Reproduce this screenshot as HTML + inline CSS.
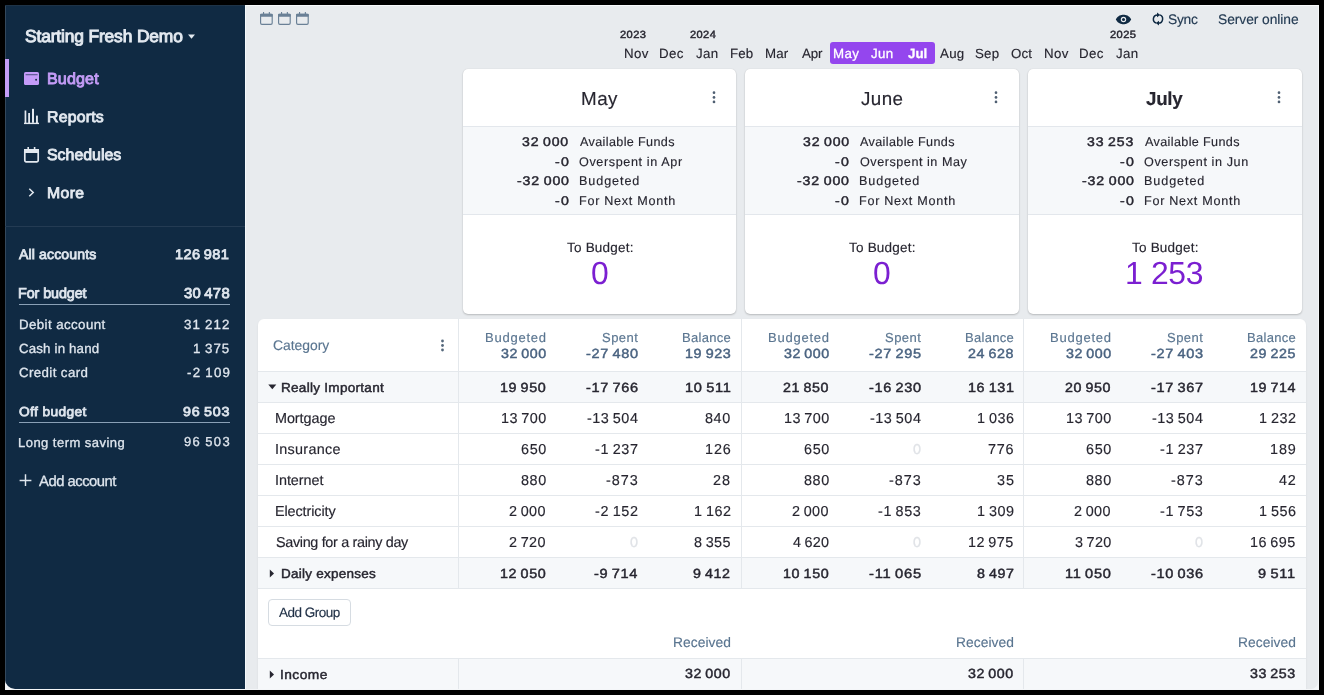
<!DOCTYPE html>
<html><head><meta charset="utf-8"><style>
*{box-sizing:border-box;margin:0;padding:0}
html,body{width:1324px;height:695px;overflow:hidden;background:#000}
body{font-family:"Liberation Sans",sans-serif;position:relative}
.t{position:absolute;white-space:nowrap;will-change:transform;text-rendering:geometricPrecision}
.b{position:absolute}
</style></head>
<body>
<div style="position:absolute;left:5px;top:5px;width:1314px;height:685px;background:#f4f6f8"></div>
<div id="clip" style="position:absolute;left:0;top:0;width:1324px;height:695px;clip-path:inset(5px 6px 6px 5px round 0 0 7px 10px)">
<div class="b" style="left:5px;top:5px;width:1314px;height:685px;background:#e8ebee;border-radius:0 0 10px 10px"></div>
<div class="b" style="left:5px;top:5px;width:240px;height:685px;background:#102a43;border-bottom-left-radius:10px"></div>
<div class="b" style="left:245px;top:5px;width:1074px;height:1px;background:#f8fafc"></div>
<div class="b" style="left:245px;top:5px;width:1px;height:685px;background:#f4f8fb"></div>
<div class="b" style="left:5px;top:5px;width:1px;height:685px;background:#33485c"></div>
<div class="b" style="left:5px;top:5px;width:240px;height:1px;background:#1e3347"></div>
<div class="t" style="left:24.74px;top:28px;font-size:17.4px;line-height:17.4px;letter-spacing:-0.144px;font-weight:normal;color:#e3e9f0;-webkit-text-stroke:0.9666666666666666px #e3e9f0;">Starting Fresh Demo</div>
<svg class="b" style="left:187px;top:33px" width="9" height="7" viewBox="0 0 9 7"><path d="M1 1.5 L8 1.5 L4.5 5.8 Z" fill="#e3e9f0"/></svg>
<div class="b" style="left:5px;top:59px;width:4px;height:38px;background:#c49cf7"></div>
<div class="t" style="left:46.64px;top:72px;font-size:15.9px;line-height:15.9px;letter-spacing:0.128px;transform:scaleX(1.0132);transform-origin:0 0;font-weight:normal;color:#c49cf7;-webkit-text-stroke:0.8833333333333333px #c49cf7;">Budget</div>
<div class="t" style="left:46.66px;top:110px;font-size:15.5px;line-height:15.5px;letter-spacing:0.194px;transform:scaleX(1.0227);transform-origin:0 0;font-weight:normal;color:#e3e9f0;-webkit-text-stroke:0.8611111111111112px #e3e9f0;">Reports</div>
<div class="t" style="left:47.21px;top:148px;font-size:15.9px;line-height:15.9px;letter-spacing:0.004px;font-weight:normal;color:#e3e9f0;-webkit-text-stroke:0.8833333333333333px #e3e9f0;">Schedules</div>
<div class="t" style="left:46.66px;top:186px;font-size:15.2px;line-height:15.2px;letter-spacing:0.385px;transform:scaleX(1.0365);transform-origin:0 0;font-weight:normal;color:#e3e9f0;-webkit-text-stroke:0.8444444444444443px #e3e9f0;">More</div>
<svg class="b" style="left:24px;top:72px" width="15" height="13" viewBox="0 0 15 13">
<rect x="0" y="0" width="15" height="13" rx="1.6" fill="#c49bf8"/>
<rect x="1.6" y="2.3" width="12" height="0.9" fill="#102a43" opacity="0.75"/>
<circle cx="12.1" cy="7.8" r="0.95" fill="#102a43"/>
</svg>
<svg class="b" style="left:23px;top:108px" width="17" height="17" viewBox="0 0 17 17">
<g fill="#e3e9f0">
<rect x="1" y="14.7" width="15" height="1.4"/>
<rect x="1.6" y="2.5" width="1.7" height="12.5"/>
<rect x="5.2" y="5" width="1.8" height="10"/>
<rect x="9" y="0.8" width="2" height="14"/>
<rect x="13" y="7.6" width="1.9" height="7.4"/>
</g></svg>
<svg class="b" style="left:23px;top:146px" width="17" height="17" viewBox="0 0 17 17">
<rect x="1.8" y="3.8" width="13.4" height="12" rx="1.3" fill="none" stroke="#e3e9f0" stroke-width="1.7"/>
<g fill="#e3e9f0"><rect x="1" y="3" width="15" height="4"/><rect x="4.4" y="1" width="1.6" height="3"/><rect x="10.8" y="1" width="1.6" height="3"/></g>
</svg>
<svg class="b" style="left:27px;top:187px" width="9" height="11" viewBox="0 0 9 11">
<path d="M2.3 1.8 L6.2 5.5 L2.3 9.2" fill="none" stroke="#e3e9f0" stroke-width="1.5"/>
</svg>
<div class="b" style="left:5px;top:226px;width:240px;height:1px;background:#243b53"></div>
<div class="t" style="left:19.30px;top:248px;font-size:13.9px;line-height:13.9px;letter-spacing:0.104px;transform:scaleX(1.0156);transform-origin:0 0;font-weight:normal;color:#dfe6ee;-webkit-text-stroke:0.7722222222222223px #dfe6ee;">All accounts</div>
<div class="t" style="left:175.13px;top:248px;font-size:13.9px;line-height:13.9px;letter-spacing:0.364px;transform:scaleX(1.0483);transform-origin:0 0;font-weight:normal;color:#dfe6ee;-webkit-text-stroke:0.7722222222222223px #dfe6ee;">126 981</div>
<div class="t" style="left:18.14px;top:287px;font-size:14.4px;line-height:14.4px;letter-spacing:-0.114px;font-weight:normal;color:#dfe6ee;-webkit-text-stroke:0.8px #dfe6ee;">For budget</div>
<div class="t" style="left:183.70px;top:287px;font-size:14.4px;line-height:14.4px;letter-spacing:0.263px;transform:scaleX(1.0325);transform-origin:0 0;font-weight:normal;color:#dfe6ee;-webkit-text-stroke:0.8px #dfe6ee;">30 478</div>
<div class="b" style="left:19px;top:304px;width:211px;height:1px;background:#8aa0b6"></div>
<div class="t" style="left:18.54px;top:318px;font-size:13.3px;line-height:13.3px;letter-spacing:0.408px;font-weight:normal;color:#dfe6ee;-webkit-text-stroke:0.3px #dfe6ee;">Debit account</div>
<div class="t" style="left:184.23px;top:318px;font-size:13.3px;line-height:13.3px;letter-spacing:1.146px;font-weight:normal;color:#dfe6ee;-webkit-text-stroke:0.3px #dfe6ee;">31 212</div>
<div class="t" style="left:18.94px;top:342px;font-size:13.3px;line-height:13.3px;letter-spacing:0.157px;font-weight:normal;color:#dfe6ee;-webkit-text-stroke:0.3px #dfe6ee;">Cash in hand</div>
<div class="t" style="left:193.30px;top:342px;font-size:13.3px;line-height:13.3px;letter-spacing:0.994px;font-weight:normal;color:#dfe6ee;-webkit-text-stroke:0.3px #dfe6ee;">1 375</div>
<div class="t" style="left:18.94px;top:366px;font-size:13.3px;line-height:13.3px;letter-spacing:0.383px;font-weight:normal;color:#dfe6ee;-webkit-text-stroke:0.3px #dfe6ee;">Credit card</div>
<div class="t" style="left:186.67px;top:366px;font-size:13.3px;line-height:13.3px;letter-spacing:1.258px;font-weight:normal;color:#dfe6ee;-webkit-text-stroke:0.3px #dfe6ee;">-2 109</div>
<div class="t" style="left:19.11px;top:405px;font-size:13.0px;line-height:13.0px;letter-spacing:0.362px;transform:scaleX(1.0575);transform-origin:0 0;font-weight:normal;color:#dfe6ee;-webkit-text-stroke:0.75px #dfe6ee;">Off budget</div>
<div class="t" style="left:183.38px;top:405px;font-size:13.0px;line-height:13.0px;letter-spacing:0.683px;transform:scaleX(1.0998);transform-origin:0 0;font-weight:normal;color:#dfe6ee;-webkit-text-stroke:0.75px #dfe6ee;">96 503</div>
<div class="b" style="left:19px;top:422px;width:211px;height:1px;background:#8aa0b6"></div>
<div class="t" style="left:18.46px;top:436px;font-size:13.0px;line-height:13.0px;letter-spacing:0.467px;font-weight:normal;color:#dfe6ee;-webkit-text-stroke:0.3px #dfe6ee;">Long term saving</div>
<div class="t" style="left:184.31px;top:435px;font-size:13.0px;line-height:13.0px;letter-spacing:1.373px;font-weight:normal;color:#dfe6ee;-webkit-text-stroke:0.3px #dfe6ee;">96 503</div>
<svg class="b" style="left:18.5px;top:474.4px" width="13" height="13" viewBox="0 0 13 13">
<path d="M6.5 0.3 V11.9 M0.6 6.5 H12.4" stroke="#dfe6ee" stroke-width="1.45"/></svg>
<div class="t" style="left:39.30px;top:475px;font-size:14.8px;line-height:14.8px;letter-spacing:-0.481px;font-weight:normal;color:#dfe6ee;-webkit-text-stroke:0.3px #dfe6ee;">Add account</div>
<svg class="b" style="left:260px;top:12px" width="13" height="13" viewBox="0 0 13 13">
<rect x="0.6" y="2.2" width="11.6" height="10.1" rx="1.3" fill="none" stroke="#6a8096" stroke-width="1.15"/>
<rect x="0.05" y="1.8" width="12.7" height="3" rx="0.8" fill="#6a8096"/>
<rect x="3" y="0" width="1.1" height="2.6" fill="#6a8096"/><rect x="8.8" y="0" width="1.1" height="2.6" fill="#6a8096"/>
</svg>
<svg class="b" style="left:278px;top:12px" width="13" height="13" viewBox="0 0 13 13">
<rect x="0.6" y="2.2" width="11.6" height="10.1" rx="1.3" fill="none" stroke="#6a8096" stroke-width="1.15"/>
<rect x="0.05" y="1.8" width="12.7" height="3" rx="0.8" fill="#6a8096"/>
<rect x="3" y="0" width="1.1" height="2.6" fill="#6a8096"/><rect x="8.8" y="0" width="1.1" height="2.6" fill="#6a8096"/>
</svg>
<svg class="b" style="left:296px;top:12px" width="13" height="13" viewBox="0 0 13 13">
<rect x="0.6" y="2.2" width="11.6" height="10.1" rx="1.3" fill="none" stroke="#6a8096" stroke-width="1.15"/>
<rect x="0.05" y="1.8" width="12.7" height="3" rx="0.8" fill="#6a8096"/>
<rect x="3" y="0" width="1.1" height="2.6" fill="#6a8096"/><rect x="8.8" y="0" width="1.1" height="2.6" fill="#6a8096"/>
</svg>
<svg class="b" style="left:1115px;top:14px" width="17" height="11" viewBox="0 0 17 11">
<path d="M0.8 5.5 C3 1.5 6 0.8 8.5 0.8 C11 0.8 14 1.5 16.2 5.5 C14 9.5 11 10.2 8.5 10.2 C6 10.2 3 9.5 0.8 5.5 Z" fill="#102a43"/>
<circle cx="8.5" cy="5.5" r="2.7" fill="#e8ebee"/><circle cx="8.5" cy="5.5" r="1.5" fill="#102a43"/>
</svg>
<svg class="b" style="left:1152px;top:12px" width="12" height="14" viewBox="0 0 12 14">
<path d="M5.6 2.9 A4.2 4.2 0 0 0 4.3 11.1" fill="none" stroke="#102a43" stroke-width="1.5"/>
<path d="M6.4 11.1 A4.2 4.2 0 0 0 7.7 2.9" fill="none" stroke="#102a43" stroke-width="1.5"/>
<path d="M5 0.6 L8.2 2.9 L5 5.2 Z" fill="#102a43"/>
<path d="M7 8.8 L3.8 11.1 L7 13.4 Z" fill="#102a43"/>
</svg>
<div class="t" style="left:1167.88px;top:13px;font-size:13.8px;line-height:13.8px;letter-spacing:-0.246px;font-weight:normal;color:#243b53;-webkit-text-stroke:0.15px #243b53;">Sync</div>
<div class="t" style="left:1217.98px;top:13px;font-size:13.8px;line-height:13.8px;letter-spacing:-0.059px;font-weight:normal;color:#243b53;-webkit-text-stroke:0.15px #243b53;">Server online</div>
<div class="b" style="left:830px;top:42px;width:105px;height:22px;background:#9446ee;border-radius:3px"></div>
<div class="t" style="left:624.29px;top:47px;font-size:13.3px;line-height:13.3px;letter-spacing:0.345px;font-weight:normal;color:#272630;-webkit-text-stroke:0.15px #272630;">Nov</div>
<div class="t" style="left:659.44px;top:47px;font-size:13.3px;line-height:13.3px;letter-spacing:0.361px;font-weight:normal;color:#272630;-webkit-text-stroke:0.15px #272630;">Dec</div>
<div class="t" style="left:696.30px;top:47px;font-size:13.3px;line-height:13.3px;letter-spacing:0.292px;font-weight:normal;color:#272630;-webkit-text-stroke:0.15px #272630;">Jan</div>
<div class="t" style="left:730.14px;top:47px;font-size:13.3px;line-height:13.3px;letter-spacing:0.160px;font-weight:normal;color:#272630;-webkit-text-stroke:0.15px #272630;">Feb</div>
<div class="t" style="left:764.94px;top:47px;font-size:13.3px;line-height:13.3px;letter-spacing:0.160px;font-weight:normal;color:#272630;-webkit-text-stroke:0.15px #272630;">Mar</div>
<div class="t" style="left:801.80px;top:47px;font-size:13.3px;line-height:13.3px;letter-spacing:-0.074px;font-weight:normal;color:#272630;-webkit-text-stroke:0.15px #272630;">Apr</div>
<div class="t" style="left:833.49px;top:47px;font-size:13.3px;line-height:13.3px;letter-spacing:0.413px;font-weight:normal;color:#ffffff;-webkit-text-stroke:0.3px #ffffff;">May</div>
<div class="t" style="left:871.30px;top:47px;font-size:13.3px;line-height:13.3px;letter-spacing:0.292px;font-weight:normal;color:#ffffff;-webkit-text-stroke:0.3px #ffffff;">Jun</div>
<div class="t" style="left:907.70px;top:47px;font-size:13.3px;line-height:13.3px;letter-spacing:0.028px;transform:scaleX(1.0031);transform-origin:0 0;font-weight:bold;color:#ffffff;-webkit-text-stroke:0.3px #ffffff;">Jul</div>
<div class="t" style="left:940.30px;top:47px;font-size:13.3px;line-height:13.3px;letter-spacing:0.262px;font-weight:normal;color:#272630;-webkit-text-stroke:0.15px #272630;">Aug</div>
<div class="t" style="left:974.90px;top:47px;font-size:13.3px;line-height:13.3px;letter-spacing:0.228px;font-weight:normal;color:#272630;-webkit-text-stroke:0.15px #272630;">Sep</div>
<div class="t" style="left:1011.20px;top:47px;font-size:13.3px;line-height:13.3px;letter-spacing:0.159px;font-weight:normal;color:#272630;-webkit-text-stroke:0.15px #272630;">Oct</div>
<div class="t" style="left:1044.29px;top:47px;font-size:13.3px;line-height:13.3px;letter-spacing:0.345px;font-weight:normal;color:#272630;-webkit-text-stroke:0.15px #272630;">Nov</div>
<div class="t" style="left:1079.44px;top:47px;font-size:13.3px;line-height:13.3px;letter-spacing:0.361px;font-weight:normal;color:#272630;-webkit-text-stroke:0.15px #272630;">Dec</div>
<div class="t" style="left:1116.30px;top:47px;font-size:13.3px;line-height:13.3px;letter-spacing:0.292px;font-weight:normal;color:#272630;-webkit-text-stroke:0.15px #272630;">Jan</div>
<div class="t" style="left:619.67px;top:30px;font-size:10.5px;line-height:10.5px;letter-spacing:0.400px;transform:scaleX(1.0565);transform-origin:0 0;font-weight:normal;color:#272630;-webkit-text-stroke:0.45px #272630;">2023</div>
<div class="t" style="left:689.67px;top:30px;font-size:10.5px;line-height:10.5px;letter-spacing:0.376px;transform:scaleX(1.0526);transform-origin:0 0;font-weight:normal;color:#272630;-webkit-text-stroke:0.45px #272630;">2024</div>
<div class="t" style="left:1109.67px;top:30px;font-size:10.5px;line-height:10.5px;letter-spacing:0.400px;transform:scaleX(1.0565);transform-origin:0 0;font-weight:normal;color:#272630;-webkit-text-stroke:0.45px #272630;">2025</div>
<div class="b" style="left:463px;top:69px;width:273px;height:245px;background:#fff;border-radius:5px;box-shadow:0 1px 2px rgba(0,0,0,0.2),0 0 1px rgba(0,0,0,0.12);overflow:hidden"><div class="b" style="left:0;top:57px;width:273px;height:89px;background:#f6f8fa;border-top:1px solid #e3e7ec;border-bottom:1px solid #e3e7ec"></div></div>
<div class="t" style="left:580.50px;top:90px;font-size:18.8px;line-height:18.8px;letter-spacing:0.486px;font-weight:normal;color:#272630;-webkit-text-stroke:0.15px #272630;">May</div>
<svg class="b" style="left:711.5px;top:90px" width="4" height="15" viewBox="0 0 4 15"><g fill="#4f5f72"><circle cx="2" cy="2.7" r="1.35"/><circle cx="2" cy="7.4" r="1.35"/><circle cx="2" cy="11.9" r="1.35"/></g></svg>
<div class="t" style="left:522.43px;top:136px;font-size:12.6px;line-height:12.6px;letter-spacing:0.760px;transform:scaleX(1.1157);transform-origin:0 0;font-weight:normal;color:#272630;-webkit-text-stroke:0.45px #272630;">32 000</div>
<div class="t" style="left:579.60px;top:136px;font-size:12.6px;line-height:12.6px;letter-spacing:0.367px;font-weight:normal;color:#272630;-webkit-text-stroke:0.15px #272630;">Available Funds</div>
<div class="t" style="left:554.76px;top:156px;font-size:12.6px;line-height:12.6px;letter-spacing:1.107px;transform:scaleX(1.1208);transform-origin:0 0;font-weight:normal;color:#272630;-webkit-text-stroke:0.45px #272630;">-0</div>
<div class="t" style="left:579.03px;top:156px;font-size:12.6px;line-height:12.6px;letter-spacing:0.619px;font-weight:normal;color:#272630;-webkit-text-stroke:0.15px #272630;">Overspent in Apr</div>
<div class="t" style="left:516.56px;top:175px;font-size:12.6px;line-height:12.6px;letter-spacing:0.751px;transform:scaleX(1.1240);transform-origin:0 0;font-weight:normal;color:#272630;-webkit-text-stroke:0.45px #272630;">-32 000</div>
<div class="t" style="left:578.59px;top:175px;font-size:12.6px;line-height:12.6px;letter-spacing:0.919px;font-weight:normal;color:#272630;-webkit-text-stroke:0.15px #272630;">Budgeted</div>
<div class="t" style="left:554.76px;top:195px;font-size:12.6px;line-height:12.6px;letter-spacing:1.107px;transform:scaleX(1.1208);transform-origin:0 0;font-weight:normal;color:#272630;-webkit-text-stroke:0.45px #272630;">-0</div>
<div class="t" style="left:578.59px;top:195px;font-size:12.6px;line-height:12.6px;letter-spacing:0.719px;font-weight:normal;color:#272630;-webkit-text-stroke:0.15px #272630;">For Next Month</div>
<div class="t" style="left:566.73px;top:241px;font-size:13.5px;line-height:13.5px;letter-spacing:0.210px;font-weight:normal;color:#272630;-webkit-text-stroke:0.15px #272630;">To Budget:</div>
<div class="t" style="left:590.65px;top:258px;font-size:31.9px;line-height:31.9px;letter-spacing:0.000px;font-weight:normal;color:#7b1fd1;">0</div>
<div class="b" style="left:745px;top:69px;width:274px;height:245px;background:#fff;border-radius:5px;box-shadow:0 1px 2px rgba(0,0,0,0.2),0 0 1px rgba(0,0,0,0.12);overflow:hidden"><div class="b" style="left:0;top:57px;width:274px;height:89px;background:#f6f8fa;border-top:1px solid #e3e7ec;border-bottom:1px solid #e3e7ec"></div></div>
<div class="t" style="left:861.22px;top:90px;font-size:18.8px;line-height:18.8px;letter-spacing:0.444px;font-weight:normal;color:#272630;-webkit-text-stroke:0.15px #272630;">June</div>
<svg class="b" style="left:993.5px;top:90px" width="4" height="15" viewBox="0 0 4 15"><g fill="#4f5f72"><circle cx="2" cy="2.7" r="1.35"/><circle cx="2" cy="7.4" r="1.35"/><circle cx="2" cy="11.9" r="1.35"/></g></svg>
<div class="t" style="left:803.03px;top:136px;font-size:12.6px;line-height:12.6px;letter-spacing:0.760px;transform:scaleX(1.1157);transform-origin:0 0;font-weight:normal;color:#272630;-webkit-text-stroke:0.45px #272630;">32 000</div>
<div class="t" style="left:860.30px;top:136px;font-size:12.6px;line-height:12.6px;letter-spacing:0.367px;font-weight:normal;color:#272630;-webkit-text-stroke:0.15px #272630;">Available Funds</div>
<div class="t" style="left:835.36px;top:156px;font-size:12.6px;line-height:12.6px;letter-spacing:1.107px;transform:scaleX(1.1208);transform-origin:0 0;font-weight:normal;color:#272630;-webkit-text-stroke:0.45px #272630;">-0</div>
<div class="t" style="left:859.73px;top:156px;font-size:12.6px;line-height:12.6px;letter-spacing:0.543px;font-weight:normal;color:#272630;-webkit-text-stroke:0.15px #272630;">Overspent in May</div>
<div class="t" style="left:797.16px;top:175px;font-size:12.6px;line-height:12.6px;letter-spacing:0.751px;transform:scaleX(1.1240);transform-origin:0 0;font-weight:normal;color:#272630;-webkit-text-stroke:0.45px #272630;">-32 000</div>
<div class="t" style="left:859.29px;top:175px;font-size:12.6px;line-height:12.6px;letter-spacing:0.919px;font-weight:normal;color:#272630;-webkit-text-stroke:0.15px #272630;">Budgeted</div>
<div class="t" style="left:835.36px;top:195px;font-size:12.6px;line-height:12.6px;letter-spacing:1.107px;transform:scaleX(1.1208);transform-origin:0 0;font-weight:normal;color:#272630;-webkit-text-stroke:0.45px #272630;">-0</div>
<div class="t" style="left:859.29px;top:195px;font-size:12.6px;line-height:12.6px;letter-spacing:0.719px;font-weight:normal;color:#272630;-webkit-text-stroke:0.15px #272630;">For Next Month</div>
<div class="t" style="left:849.23px;top:241px;font-size:13.5px;line-height:13.5px;letter-spacing:0.210px;font-weight:normal;color:#272630;-webkit-text-stroke:0.15px #272630;">To Budget:</div>
<div class="t" style="left:873.15px;top:258px;font-size:31.9px;line-height:31.9px;letter-spacing:0.000px;font-weight:normal;color:#7b1fd1;">0</div>
<div class="b" style="left:1028px;top:69px;width:274px;height:245px;background:#fff;border-radius:5px;box-shadow:0 1px 2px rgba(0,0,0,0.2),0 0 1px rgba(0,0,0,0.12);overflow:hidden"><div class="b" style="left:0;top:57px;width:274px;height:89px;background:#f6f8fa;border-top:1px solid #e3e7ec;border-bottom:1px solid #e3e7ec"></div></div>
<div class="t" style="left:1146.47px;top:90px;font-size:18.8px;line-height:18.8px;letter-spacing:-0.273px;font-weight:bold;color:#272630;-webkit-text-stroke:0.15px #272630;">July</div>
<svg class="b" style="left:1276.5px;top:90px" width="4" height="15" viewBox="0 0 4 15"><g fill="#4f5f72"><circle cx="2" cy="2.7" r="1.35"/><circle cx="2" cy="7.4" r="1.35"/><circle cx="2" cy="11.9" r="1.35"/></g></svg>
<div class="t" style="left:1087.43px;top:136px;font-size:12.6px;line-height:12.6px;letter-spacing:0.765px;transform:scaleX(1.1168);transform-origin:0 0;font-weight:normal;color:#272630;-webkit-text-stroke:0.45px #272630;">33 253</div>
<div class="t" style="left:1145.00px;top:136px;font-size:12.6px;line-height:12.6px;letter-spacing:0.367px;font-weight:normal;color:#272630;-webkit-text-stroke:0.15px #272630;">Available Funds</div>
<div class="t" style="left:1119.76px;top:156px;font-size:12.6px;line-height:12.6px;letter-spacing:1.107px;transform:scaleX(1.1208);transform-origin:0 0;font-weight:normal;color:#272630;-webkit-text-stroke:0.45px #272630;">-0</div>
<div class="t" style="left:1144.43px;top:156px;font-size:12.6px;line-height:12.6px;letter-spacing:0.598px;font-weight:normal;color:#272630;-webkit-text-stroke:0.15px #272630;">Overspent in Jun</div>
<div class="t" style="left:1081.56px;top:175px;font-size:12.6px;line-height:12.6px;letter-spacing:0.751px;transform:scaleX(1.1240);transform-origin:0 0;font-weight:normal;color:#272630;-webkit-text-stroke:0.45px #272630;">-32 000</div>
<div class="t" style="left:1143.99px;top:175px;font-size:12.6px;line-height:12.6px;letter-spacing:0.919px;font-weight:normal;color:#272630;-webkit-text-stroke:0.15px #272630;">Budgeted</div>
<div class="t" style="left:1119.76px;top:195px;font-size:12.6px;line-height:12.6px;letter-spacing:1.107px;transform:scaleX(1.1208);transform-origin:0 0;font-weight:normal;color:#272630;-webkit-text-stroke:0.45px #272630;">-0</div>
<div class="t" style="left:1143.99px;top:195px;font-size:12.6px;line-height:12.6px;letter-spacing:0.719px;font-weight:normal;color:#272630;-webkit-text-stroke:0.15px #272630;">For Next Month</div>
<div class="t" style="left:1132.23px;top:241px;font-size:13.5px;line-height:13.5px;letter-spacing:0.210px;font-weight:normal;color:#272630;-webkit-text-stroke:0.15px #272630;">To Budget:</div>
<div class="t" style="left:1125.21px;top:258px;font-size:31.9px;line-height:31.9px;letter-spacing:-0.320px;font-weight:normal;color:#7b1fd1;">1 253</div>
<div class="b" style="left:258px;top:319px;width:1048px;height:400px;background:#fff;border-radius:6px 6px 0 0;box-shadow:0 1px 2px rgba(0,0,0,0.08)"></div>
<div class="b" style="left:258px;top:371px;width:1048px;height:1px;background:#e4e8ec"></div>
<div class="b" style="left:258px;top:372px;width:1048px;height:30px;background:#f6f8fa"></div>
<div class="b" style="left:258px;top:558px;width:1048px;height:30px;background:#f6f8fa"></div>
<div class="b" style="left:258px;top:402px;width:1048px;height:1px;background:#e4e8ec"></div>
<div class="b" style="left:258px;top:433px;width:1048px;height:1px;background:#e4e8ec"></div>
<div class="b" style="left:258px;top:464px;width:1048px;height:1px;background:#e4e8ec"></div>
<div class="b" style="left:258px;top:495px;width:1048px;height:1px;background:#e4e8ec"></div>
<div class="b" style="left:258px;top:526px;width:1048px;height:1px;background:#e4e8ec"></div>
<div class="b" style="left:258px;top:557px;width:1048px;height:1px;background:#e4e8ec"></div>
<div class="b" style="left:258px;top:588px;width:1048px;height:1px;background:#e4e8ec"></div>
<div class="b" style="left:458px;top:319px;width:1px;height:270px;background:#e4e8ec"></div>
<div class="b" style="left:741px;top:319px;width:1px;height:270px;background:#e4e8ec"></div>
<div class="b" style="left:1023px;top:319px;width:1px;height:270px;background:#e4e8ec"></div>
<div class="b" style="left:258px;top:658px;width:1048px;height:1px;background:#e4e8ec"></div>
<div class="b" style="left:258px;top:659px;width:1048px;height:40px;background:#f6f8fa"></div>
<div class="b" style="left:458px;top:659px;width:1px;height:40px;background:#e4e8ec"></div>
<div class="b" style="left:741px;top:659px;width:1px;height:40px;background:#e4e8ec"></div>
<div class="b" style="left:1023px;top:659px;width:1px;height:40px;background:#e4e8ec"></div>
<div class="t" style="left:272.91px;top:339px;font-size:13.9px;line-height:13.9px;letter-spacing:-0.020px;font-weight:normal;color:#5a7590;-webkit-text-stroke:0.15px #5a7590;">Category</div>
<svg class="b" style="left:440px;top:338px" width="5" height="15" viewBox="0 0 5 15"><g fill="#55687c"><circle cx="2.5" cy="3" r="1.4"/><circle cx="2.5" cy="7.5" r="1.4"/><circle cx="2.5" cy="12" r="1.4"/></g></svg>
<div class="t" style="left:485.26px;top:331px;font-size:13.0px;line-height:13.0px;letter-spacing:0.769px;font-weight:normal;color:#5a7590;-webkit-text-stroke:0.15px #5a7590;">Budgeted</div>
<div class="t" style="left:500.63px;top:347px;font-size:13.3px;line-height:13.3px;letter-spacing:0.509px;transform:scaleX(1.0704);transform-origin:0 0;font-weight:normal;color:#4a6380;-webkit-text-stroke:0.45px #4a6380;">32 000</div>
<div class="t" style="left:601.72px;top:331px;font-size:13.0px;line-height:13.0px;letter-spacing:0.464px;font-weight:normal;color:#5a7590;-webkit-text-stroke:0.15px #5a7590;">Spent</div>
<div class="t" style="left:585.74px;top:347px;font-size:13.3px;line-height:13.3px;letter-spacing:0.600px;transform:scaleX(1.0912);transform-origin:0 0;font-weight:normal;color:#4a6380;-webkit-text-stroke:0.45px #4a6380;">-27 480</div>
<div class="t" style="left:681.66px;top:331px;font-size:13.0px;line-height:13.0px;letter-spacing:0.311px;font-weight:normal;color:#5a7590;-webkit-text-stroke:0.15px #5a7590;">Balance</div>
<div class="t" style="left:684.55px;top:347px;font-size:13.3px;line-height:13.3px;letter-spacing:0.560px;transform:scaleX(1.0793);transform-origin:0 0;font-weight:normal;color:#4a6380;-webkit-text-stroke:0.45px #4a6380;">19 923</div>
<div class="t" style="left:768.26px;top:331px;font-size:13.0px;line-height:13.0px;letter-spacing:0.769px;font-weight:normal;color:#5a7590;-webkit-text-stroke:0.15px #5a7590;">Budgeted</div>
<div class="t" style="left:783.63px;top:347px;font-size:13.3px;line-height:13.3px;letter-spacing:0.509px;transform:scaleX(1.0704);transform-origin:0 0;font-weight:normal;color:#4a6380;-webkit-text-stroke:0.45px #4a6380;">32 000</div>
<div class="t" style="left:884.72px;top:331px;font-size:13.0px;line-height:13.0px;letter-spacing:0.464px;font-weight:normal;color:#5a7590;-webkit-text-stroke:0.15px #5a7590;">Spent</div>
<div class="t" style="left:868.74px;top:347px;font-size:13.3px;line-height:13.3px;letter-spacing:0.605px;transform:scaleX(1.0921);transform-origin:0 0;font-weight:normal;color:#4a6380;-webkit-text-stroke:0.45px #4a6380;">-27 295</div>
<div class="t" style="left:964.66px;top:331px;font-size:13.0px;line-height:13.0px;letter-spacing:0.311px;font-weight:normal;color:#5a7590;-webkit-text-stroke:0.15px #5a7590;">Balance</div>
<div class="t" style="left:967.91px;top:347px;font-size:13.3px;line-height:13.3px;letter-spacing:0.532px;transform:scaleX(1.0743);transform-origin:0 0;font-weight:normal;color:#4a6380;-webkit-text-stroke:0.45px #4a6380;">24 628</div>
<div class="t" style="left:1050.26px;top:331px;font-size:13.0px;line-height:13.0px;letter-spacing:0.769px;font-weight:normal;color:#5a7590;-webkit-text-stroke:0.15px #5a7590;">Budgeted</div>
<div class="t" style="left:1065.63px;top:347px;font-size:13.3px;line-height:13.3px;letter-spacing:0.509px;transform:scaleX(1.0704);transform-origin:0 0;font-weight:normal;color:#4a6380;-webkit-text-stroke:0.45px #4a6380;">32 000</div>
<div class="t" style="left:1166.71px;top:331px;font-size:13.0px;line-height:13.0px;letter-spacing:0.464px;font-weight:normal;color:#5a7590;-webkit-text-stroke:0.15px #5a7590;">Spent</div>
<div class="t" style="left:1150.74px;top:347px;font-size:13.3px;line-height:13.3px;letter-spacing:0.605px;transform:scaleX(1.0921);transform-origin:0 0;font-weight:normal;color:#4a6380;-webkit-text-stroke:0.45px #4a6380;">-27 403</div>
<div class="t" style="left:1246.66px;top:331px;font-size:13.0px;line-height:13.0px;letter-spacing:0.311px;font-weight:normal;color:#5a7590;-webkit-text-stroke:0.15px #5a7590;">Balance</div>
<div class="t" style="left:1249.91px;top:347px;font-size:13.3px;line-height:13.3px;letter-spacing:0.532px;transform:scaleX(1.0743);transform-origin:0 0;font-weight:normal;color:#4a6380;-webkit-text-stroke:0.45px #4a6380;">29 225</div>
<svg class="b" style="left:268px;top:384px" width="9" height="7" viewBox="0 0 9 7"><path d="M0.3 0.4 H8.3 L4.3 5.2 Z" fill="#272630"/></svg>
<div class="t" style="left:280.64px;top:381px;font-size:13.0px;line-height:13.0px;letter-spacing:0.257px;transform:scaleX(1.0430);transform-origin:0 0;font-weight:normal;color:#272630;-webkit-text-stroke:0.45px #272630;">Really Important</div>
<div class="t" style="left:500.05px;top:381px;font-size:13.3px;line-height:13.3px;letter-spacing:0.554px;transform:scaleX(1.0783);transform-origin:0 0;font-weight:normal;color:#272630;-webkit-text-stroke:0.45px #272630;">19 950</div>
<div class="t" style="left:585.74px;top:381px;font-size:13.3px;line-height:13.3px;letter-spacing:0.605px;transform:scaleX(1.0921);transform-origin:0 0;font-weight:normal;color:#272630;-webkit-text-stroke:0.45px #272630;">-17 766</div>
<div class="t" style="left:684.53px;top:381px;font-size:13.3px;line-height:13.3px;letter-spacing:0.649px;transform:scaleX(1.0960);transform-origin:0 0;font-weight:normal;color:#272630;-webkit-text-stroke:0.45px #272630;">10 511</div>
<div class="t" style="left:783.41px;top:381px;font-size:13.3px;line-height:13.3px;letter-spacing:0.526px;transform:scaleX(1.0733);transform-origin:0 0;font-weight:normal;color:#272630;-webkit-text-stroke:0.45px #272630;">21 850</div>
<div class="t" style="left:868.74px;top:381px;font-size:13.3px;line-height:13.3px;letter-spacing:0.600px;transform:scaleX(1.0912);transform-origin:0 0;font-weight:normal;color:#272630;-webkit-text-stroke:0.45px #272630;">-16 230</div>
<div class="t" style="left:967.55px;top:381px;font-size:13.3px;line-height:13.3px;letter-spacing:0.566px;transform:scaleX(1.0803);transform-origin:0 0;font-weight:normal;color:#272630;-webkit-text-stroke:0.45px #272630;">16 131</div>
<div class="t" style="left:1065.41px;top:381px;font-size:13.3px;line-height:13.3px;letter-spacing:0.526px;transform:scaleX(1.0733);transform-origin:0 0;font-weight:normal;color:#272630;-webkit-text-stroke:0.45px #272630;">20 950</div>
<div class="t" style="left:1150.74px;top:381px;font-size:13.3px;line-height:13.3px;letter-spacing:0.609px;transform:scaleX(1.0930);transform-origin:0 0;font-weight:normal;color:#272630;-webkit-text-stroke:0.45px #272630;">-17 367</div>
<div class="t" style="left:1249.55px;top:381px;font-size:13.3px;line-height:13.3px;letter-spacing:0.543px;transform:scaleX(1.0763);transform-origin:0 0;font-weight:normal;color:#272630;-webkit-text-stroke:0.45px #272630;">19 714</div>
<div class="t" style="left:275.35px;top:412px;font-size:14.4px;line-height:14.4px;letter-spacing:-0.059px;font-weight:normal;color:#272630;-webkit-text-stroke:0.15px #272630;">Mortgage</div>
<div class="t" style="left:500.82px;top:412px;font-size:14.4px;line-height:14.4px;letter-spacing:0.454px;font-weight:normal;color:#272630;-webkit-text-stroke:0.15px #272630;">13 700</div>
<div class="t" style="left:586.92px;top:412px;font-size:14.4px;line-height:14.4px;letter-spacing:0.533px;font-weight:normal;color:#272630;-webkit-text-stroke:0.15px #272630;">-13 504</div>
<div class="t" style="left:705.32px;top:412px;font-size:14.4px;line-height:14.4px;letter-spacing:0.602px;font-weight:normal;color:#272630;-webkit-text-stroke:0.15px #272630;">840</div>
<div class="t" style="left:783.82px;top:412px;font-size:14.4px;line-height:14.4px;letter-spacing:0.454px;font-weight:normal;color:#272630;-webkit-text-stroke:0.15px #272630;">13 700</div>
<div class="t" style="left:869.92px;top:412px;font-size:14.4px;line-height:14.4px;letter-spacing:0.533px;font-weight:normal;color:#272630;-webkit-text-stroke:0.15px #272630;">-13 504</div>
<div class="t" style="left:976.62px;top:412px;font-size:14.4px;line-height:14.4px;letter-spacing:0.509px;font-weight:normal;color:#272630;-webkit-text-stroke:0.15px #272630;">1 036</div>
<div class="t" style="left:1065.82px;top:412px;font-size:14.4px;line-height:14.4px;letter-spacing:0.454px;font-weight:normal;color:#272630;-webkit-text-stroke:0.15px #272630;">13 700</div>
<div class="t" style="left:1151.92px;top:412px;font-size:14.4px;line-height:14.4px;letter-spacing:0.533px;font-weight:normal;color:#272630;-webkit-text-stroke:0.15px #272630;">-13 504</div>
<div class="t" style="left:1258.62px;top:412px;font-size:14.4px;line-height:14.4px;letter-spacing:0.527px;font-weight:normal;color:#272630;-webkit-text-stroke:0.15px #272630;">1 232</div>
<div class="t" style="left:275.20px;top:443px;font-size:14.4px;line-height:14.4px;letter-spacing:0.282px;font-weight:normal;color:#272630;-webkit-text-stroke:0.15px #272630;">Insurance</div>
<div class="t" style="left:520.68px;top:443px;font-size:14.4px;line-height:14.4px;letter-spacing:0.674px;font-weight:normal;color:#272630;-webkit-text-stroke:0.15px #272630;">650</div>
<div class="t" style="left:595.22px;top:443px;font-size:14.4px;line-height:14.4px;letter-spacing:0.650px;font-weight:normal;color:#272630;-webkit-text-stroke:0.15px #272630;">-1 237</div>
<div class="t" style="left:704.82px;top:443px;font-size:14.4px;line-height:14.4px;letter-spacing:0.890px;font-weight:normal;color:#272630;-webkit-text-stroke:0.15px #272630;">126</div>
<div class="t" style="left:803.68px;top:443px;font-size:14.4px;line-height:14.4px;letter-spacing:0.674px;font-weight:normal;color:#272630;-webkit-text-stroke:0.15px #272630;">650</div>
<div class="t" style="left:913.01px;top:443px;font-size:14.4px;line-height:14.4px;letter-spacing:0.000px;font-weight:normal;color:#e0e3e7;-webkit-text-stroke:0.3px #e0e3e7;">0</div>
<div class="t" style="left:988.18px;top:443px;font-size:14.4px;line-height:14.4px;letter-spacing:0.710px;font-weight:normal;color:#272630;-webkit-text-stroke:0.15px #272630;">776</div>
<div class="t" style="left:1085.68px;top:443px;font-size:14.4px;line-height:14.4px;letter-spacing:0.674px;font-weight:normal;color:#272630;-webkit-text-stroke:0.15px #272630;">650</div>
<div class="t" style="left:1160.22px;top:443px;font-size:14.4px;line-height:14.4px;letter-spacing:0.650px;font-weight:normal;color:#272630;-webkit-text-stroke:0.15px #272630;">-1 237</div>
<div class="t" style="left:1269.82px;top:443px;font-size:14.4px;line-height:14.4px;letter-spacing:0.926px;font-weight:normal;color:#272630;-webkit-text-stroke:0.15px #272630;">189</div>
<div class="t" style="left:275.20px;top:474px;font-size:14.4px;line-height:14.4px;letter-spacing:-0.060px;font-weight:normal;color:#272630;-webkit-text-stroke:0.15px #272630;">Internet</div>
<div class="t" style="left:520.82px;top:474px;font-size:14.4px;line-height:14.4px;letter-spacing:0.602px;font-weight:normal;color:#272630;-webkit-text-stroke:0.15px #272630;">880</div>
<div class="t" style="left:606.42px;top:474px;font-size:14.4px;line-height:14.4px;letter-spacing:0.951px;font-weight:normal;color:#272630;-webkit-text-stroke:0.15px #272630;">-873</div>
<div class="t" style="left:713.48px;top:474px;font-size:14.4px;line-height:14.4px;letter-spacing:1.112px;font-weight:normal;color:#272630;-webkit-text-stroke:0.15px #272630;">28</div>
<div class="t" style="left:803.82px;top:474px;font-size:14.4px;line-height:14.4px;letter-spacing:0.602px;font-weight:normal;color:#272630;-webkit-text-stroke:0.15px #272630;">880</div>
<div class="t" style="left:889.42px;top:474px;font-size:14.4px;line-height:14.4px;letter-spacing:0.951px;font-weight:normal;color:#272630;-webkit-text-stroke:0.15px #272630;">-873</div>
<div class="t" style="left:996.70px;top:474px;font-size:14.4px;line-height:14.4px;letter-spacing:0.896px;font-weight:normal;color:#272630;-webkit-text-stroke:0.15px #272630;">35</div>
<div class="t" style="left:1085.82px;top:474px;font-size:14.4px;line-height:14.4px;letter-spacing:0.602px;font-weight:normal;color:#272630;-webkit-text-stroke:0.15px #272630;">880</div>
<div class="t" style="left:1171.42px;top:474px;font-size:14.4px;line-height:14.4px;letter-spacing:0.951px;font-weight:normal;color:#272630;-webkit-text-stroke:0.15px #272630;">-873</div>
<div class="t" style="left:1278.91px;top:474px;font-size:14.4px;line-height:14.4px;letter-spacing:0.752px;font-weight:normal;color:#272630;-webkit-text-stroke:0.15px #272630;">42</div>
<div class="t" style="left:275.35px;top:505px;font-size:14.4px;line-height:14.4px;letter-spacing:-0.098px;font-weight:normal;color:#272630;-webkit-text-stroke:0.15px #272630;">Electricity</div>
<div class="t" style="left:509.48px;top:505px;font-size:14.4px;line-height:14.4px;letter-spacing:0.401px;font-weight:normal;color:#272630;-webkit-text-stroke:0.15px #272630;">2 000</div>
<div class="t" style="left:595.22px;top:505px;font-size:14.4px;line-height:14.4px;letter-spacing:0.650px;font-weight:normal;color:#272630;-webkit-text-stroke:0.15px #272630;">-2 152</div>
<div class="t" style="left:693.62px;top:505px;font-size:14.4px;line-height:14.4px;letter-spacing:0.527px;font-weight:normal;color:#272630;-webkit-text-stroke:0.15px #272630;">1 162</div>
<div class="t" style="left:792.48px;top:505px;font-size:14.4px;line-height:14.4px;letter-spacing:0.401px;font-weight:normal;color:#272630;-webkit-text-stroke:0.15px #272630;">2 000</div>
<div class="t" style="left:878.22px;top:505px;font-size:14.4px;line-height:14.4px;letter-spacing:0.636px;font-weight:normal;color:#272630;-webkit-text-stroke:0.15px #272630;">-1 853</div>
<div class="t" style="left:976.62px;top:505px;font-size:14.4px;line-height:14.4px;letter-spacing:0.527px;font-weight:normal;color:#272630;-webkit-text-stroke:0.15px #272630;">1 309</div>
<div class="t" style="left:1074.48px;top:505px;font-size:14.4px;line-height:14.4px;letter-spacing:0.401px;font-weight:normal;color:#272630;-webkit-text-stroke:0.15px #272630;">2 000</div>
<div class="t" style="left:1160.22px;top:505px;font-size:14.4px;line-height:14.4px;letter-spacing:0.636px;font-weight:normal;color:#272630;-webkit-text-stroke:0.15px #272630;">-1 753</div>
<div class="t" style="left:1258.62px;top:505px;font-size:14.4px;line-height:14.4px;letter-spacing:0.509px;font-weight:normal;color:#272630;-webkit-text-stroke:0.15px #272630;">1 556</div>
<div class="t" style="left:275.85px;top:536px;font-size:14.4px;line-height:14.4px;letter-spacing:-0.329px;font-weight:normal;color:#272630;-webkit-text-stroke:0.15px #272630;">Saving for a rainy day</div>
<div class="t" style="left:509.48px;top:536px;font-size:14.4px;line-height:14.4px;letter-spacing:0.401px;font-weight:normal;color:#272630;-webkit-text-stroke:0.15px #272630;">2 720</div>
<div class="t" style="left:630.01px;top:536px;font-size:14.4px;line-height:14.4px;letter-spacing:0.000px;font-weight:normal;color:#e0e3e7;-webkit-text-stroke:0.3px #e0e3e7;">0</div>
<div class="t" style="left:694.12px;top:536px;font-size:14.4px;line-height:14.4px;letter-spacing:0.383px;font-weight:normal;color:#272630;-webkit-text-stroke:0.15px #272630;">8 355</div>
<div class="t" style="left:792.91px;top:536px;font-size:14.4px;line-height:14.4px;letter-spacing:0.293px;font-weight:normal;color:#272630;-webkit-text-stroke:0.15px #272630;">4 620</div>
<div class="t" style="left:913.01px;top:536px;font-size:14.4px;line-height:14.4px;letter-spacing:0.000px;font-weight:normal;color:#e0e3e7;-webkit-text-stroke:0.3px #e0e3e7;">0</div>
<div class="t" style="left:968.32px;top:536px;font-size:14.4px;line-height:14.4px;letter-spacing:0.469px;font-weight:normal;color:#272630;-webkit-text-stroke:0.15px #272630;">12 975</div>
<div class="t" style="left:1074.70px;top:536px;font-size:14.4px;line-height:14.4px;letter-spacing:0.347px;font-weight:normal;color:#272630;-webkit-text-stroke:0.15px #272630;">3 720</div>
<div class="t" style="left:1195.01px;top:536px;font-size:14.4px;line-height:14.4px;letter-spacing:0.000px;font-weight:normal;color:#e0e3e7;-webkit-text-stroke:0.3px #e0e3e7;">0</div>
<div class="t" style="left:1250.32px;top:536px;font-size:14.4px;line-height:14.4px;letter-spacing:0.469px;font-weight:normal;color:#272630;-webkit-text-stroke:0.15px #272630;">16 695</div>
<svg class="b" style="left:269px;top:569px" width="6" height="9" viewBox="0 0 6 9"><path d="M0.8 0.6 V8.4 L5 4.5 Z" fill="#272630"/></svg>
<div class="t" style="left:280.65px;top:567px;font-size:13.0px;line-height:13.0px;letter-spacing:0.245px;transform:scaleX(1.0381);transform-origin:0 0;font-weight:normal;color:#272630;-webkit-text-stroke:0.45px #272630;">Daily expenses</div>
<div class="t" style="left:500.05px;top:567px;font-size:13.3px;line-height:13.3px;letter-spacing:0.554px;transform:scaleX(1.0783);transform-origin:0 0;font-weight:normal;color:#272630;-webkit-text-stroke:0.45px #272630;">12 050</div>
<div class="t" style="left:594.24px;top:567px;font-size:13.3px;line-height:13.3px;letter-spacing:0.610px;transform:scaleX(1.0933);transform-origin:0 0;font-weight:normal;color:#272630;-webkit-text-stroke:0.45px #272630;">-9 714</div>
<div class="t" style="left:693.48px;top:567px;font-size:13.3px;line-height:13.3px;letter-spacing:0.535px;transform:scaleX(1.0740);transform-origin:0 0;font-weight:normal;color:#272630;-webkit-text-stroke:0.45px #272630;">9 412</div>
<div class="t" style="left:783.05px;top:567px;font-size:13.3px;line-height:13.3px;letter-spacing:0.554px;transform:scaleX(1.0783);transform-origin:0 0;font-weight:normal;color:#272630;-webkit-text-stroke:0.45px #272630;">10 150</div>
<div class="t" style="left:868.74px;top:567px;font-size:13.3px;line-height:13.3px;letter-spacing:0.672px;transform:scaleX(1.1061);transform-origin:0 0;font-weight:normal;color:#272630;-webkit-text-stroke:0.45px #272630;">-11 065</div>
<div class="t" style="left:976.55px;top:567px;font-size:13.3px;line-height:13.3px;letter-spacing:0.528px;transform:scaleX(1.0727);transform-origin:0 0;font-weight:normal;color:#272630;-webkit-text-stroke:0.45px #272630;">8 497</div>
<div class="t" style="left:1065.03px;top:567px;font-size:13.3px;line-height:13.3px;letter-spacing:0.638px;transform:scaleX(1.0938);transform-origin:0 0;font-weight:normal;color:#272630;-webkit-text-stroke:0.45px #272630;">11 050</div>
<div class="t" style="left:1150.74px;top:567px;font-size:13.3px;line-height:13.3px;letter-spacing:0.605px;transform:scaleX(1.0921);transform-origin:0 0;font-weight:normal;color:#272630;-webkit-text-stroke:0.45px #272630;">-10 036</div>
<div class="t" style="left:1258.47px;top:567px;font-size:13.3px;line-height:13.3px;letter-spacing:0.640px;transform:scaleX(1.0930);transform-origin:0 0;font-weight:normal;color:#272630;-webkit-text-stroke:0.45px #272630;">9 511</div>
<div class="b" style="left:268px;top:599px;width:83px;height:27px;border:1px solid #d6dce2;border-radius:4px;background:#fff"></div>
<div class="t" style="left:279.00px;top:606px;font-size:13.5px;line-height:13.5px;letter-spacing:-0.504px;font-weight:normal;color:#1f2f45;-webkit-text-stroke:0.15px #1f2f45;">Add Group</div>
<div class="t" style="left:672.90px;top:636px;font-size:13.8px;line-height:13.8px;letter-spacing:0.055px;font-weight:normal;color:#5a7590;-webkit-text-stroke:0.15px #5a7590;">Received</div>
<div class="t" style="left:955.90px;top:636px;font-size:13.8px;line-height:13.8px;letter-spacing:0.055px;font-weight:normal;color:#5a7590;-webkit-text-stroke:0.15px #5a7590;">Received</div>
<div class="t" style="left:1237.90px;top:636px;font-size:13.8px;line-height:13.8px;letter-spacing:0.055px;font-weight:normal;color:#5a7590;-webkit-text-stroke:0.15px #5a7590;">Received</div>
<div class="t" style="left:280.49px;top:668px;font-size:13.0px;line-height:13.0px;letter-spacing:0.436px;transform:scaleX(1.0562);transform-origin:0 0;font-weight:normal;color:#272630;-webkit-text-stroke:0.45px #272630;">Income</div>
<svg class="b" style="left:269px;top:670px" width="6" height="9" viewBox="0 0 6 9"><path d="M0.8 0.6 V8.4 L5 4.5 Z" fill="#272630"/></svg>
<div class="t" style="left:685.13px;top:667px;font-size:13.3px;line-height:13.3px;letter-spacing:0.509px;transform:scaleX(1.0704);transform-origin:0 0;font-weight:normal;color:#272630;-webkit-text-stroke:0.45px #272630;">32 000</div>
<div class="t" style="left:968.13px;top:667px;font-size:13.3px;line-height:13.3px;letter-spacing:0.509px;transform:scaleX(1.0704);transform-origin:0 0;font-weight:normal;color:#272630;-webkit-text-stroke:0.45px #272630;">32 000</div>
<div class="t" style="left:1250.13px;top:667px;font-size:13.3px;line-height:13.3px;letter-spacing:0.515px;transform:scaleX(1.0714);transform-origin:0 0;font-weight:normal;color:#272630;-webkit-text-stroke:0.45px #272630;">33 253</div>
</div>
</body></html>
